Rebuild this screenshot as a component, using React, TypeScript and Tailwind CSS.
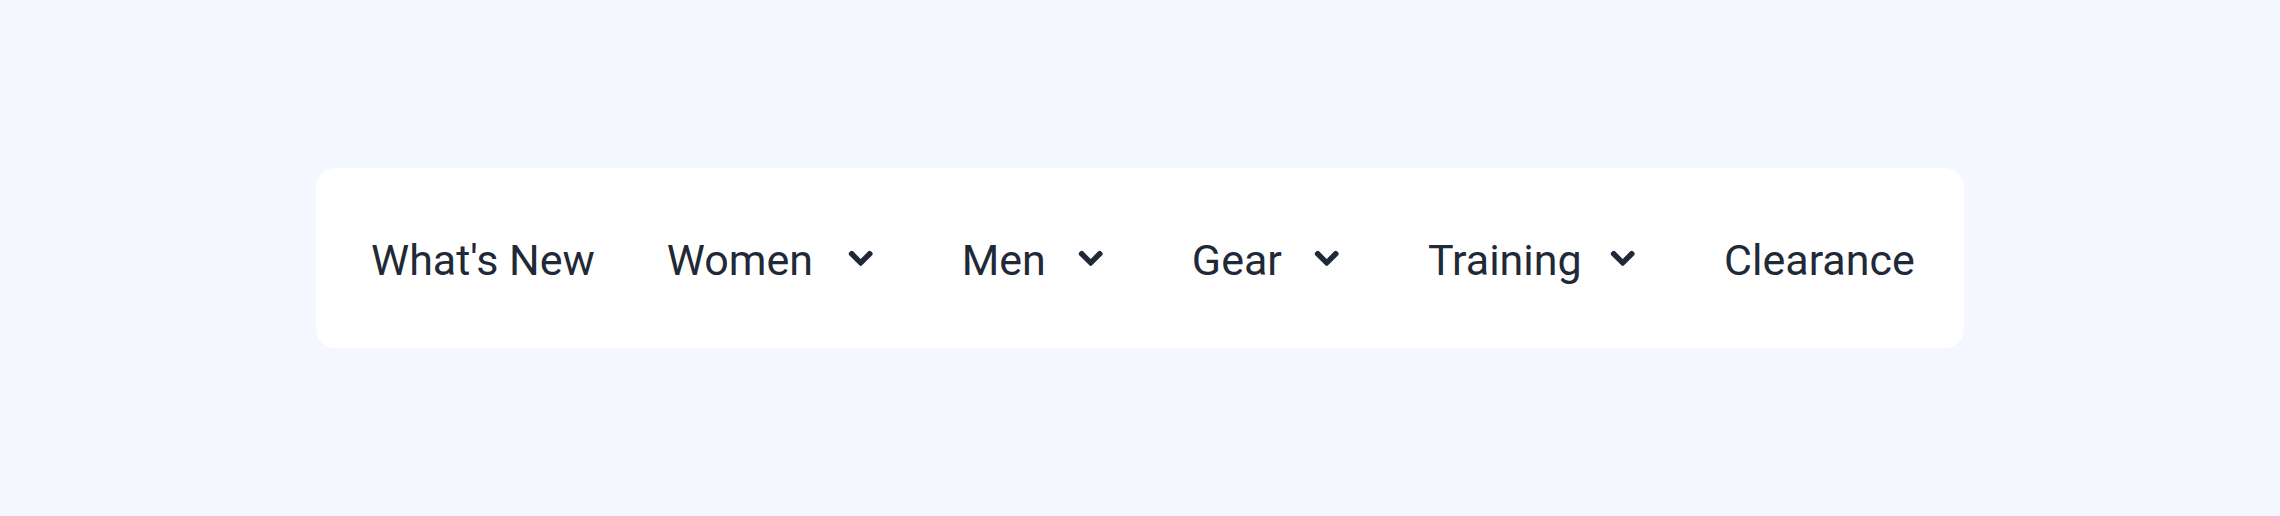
import React from "react";

function Chevron() {
  return (
    <svg
      viewBox="0 0 448 512"
      width="23.4"
      height="26.7"
      fill="currentColor"
      stroke="currentColor"
      strokeWidth="24"
      strokeLinejoin="round"
      overflow="visible"
      className="ml-[36px] mr-[20px] shrink-0"
      aria-hidden="true"
    >
      <path d="M207.029 381.476L12.686 187.132c-9.373-9.373-9.373-24.569 0-33.941l22.667-22.667c9.357-9.357 24.522-9.375 33.901-.04L224 284.505l154.745-154.021c9.379-9.335 24.544-9.317 33.901.04l22.667 22.667c9.373 9.373 9.373 24.569 0 33.941L240.971 381.476c-9.373 9.372-24.569 9.372-33.942 0z" />
    </svg>
  );
}

const items: { label: string; dropdown: boolean; w: string }[] = [
  { label: "What's New", dropdown: false, w: "w-[226px]" },
  { label: "Women", dropdown: true, w: "w-[146px]" },
  { label: "Men", dropdown: true, w: "w-[81px]" },
  { label: "Gear", dropdown: true, w: "w-[87px]" },
  { label: "Training", dropdown: true, w: "w-[147px]" },
  { label: "Clearance", dropdown: false, w: "w-[182px]" },
];

export default function App() {
  return (
    <div className="flex h-screen w-full items-center justify-center bg-[#f4f7fe] font-['Roboto',sans-serif]">
      <nav className="flex h-[180px] w-[1648px] items-center justify-between rounded-[20px] bg-white pl-[55px] pr-[58px] text-[#1f2937]">
        {items.map((it) => (
          <a
            key={it.label}
            href="#"
            className="flex items-center whitespace-nowrap text-[43px] leading-none"
          >
            <span className={`${it.w} translate-y-[2px]`}>{it.label}</span>
            {it.dropdown && <Chevron />}
          </a>
        ))}
      </nav>
    </div>
  );
}
